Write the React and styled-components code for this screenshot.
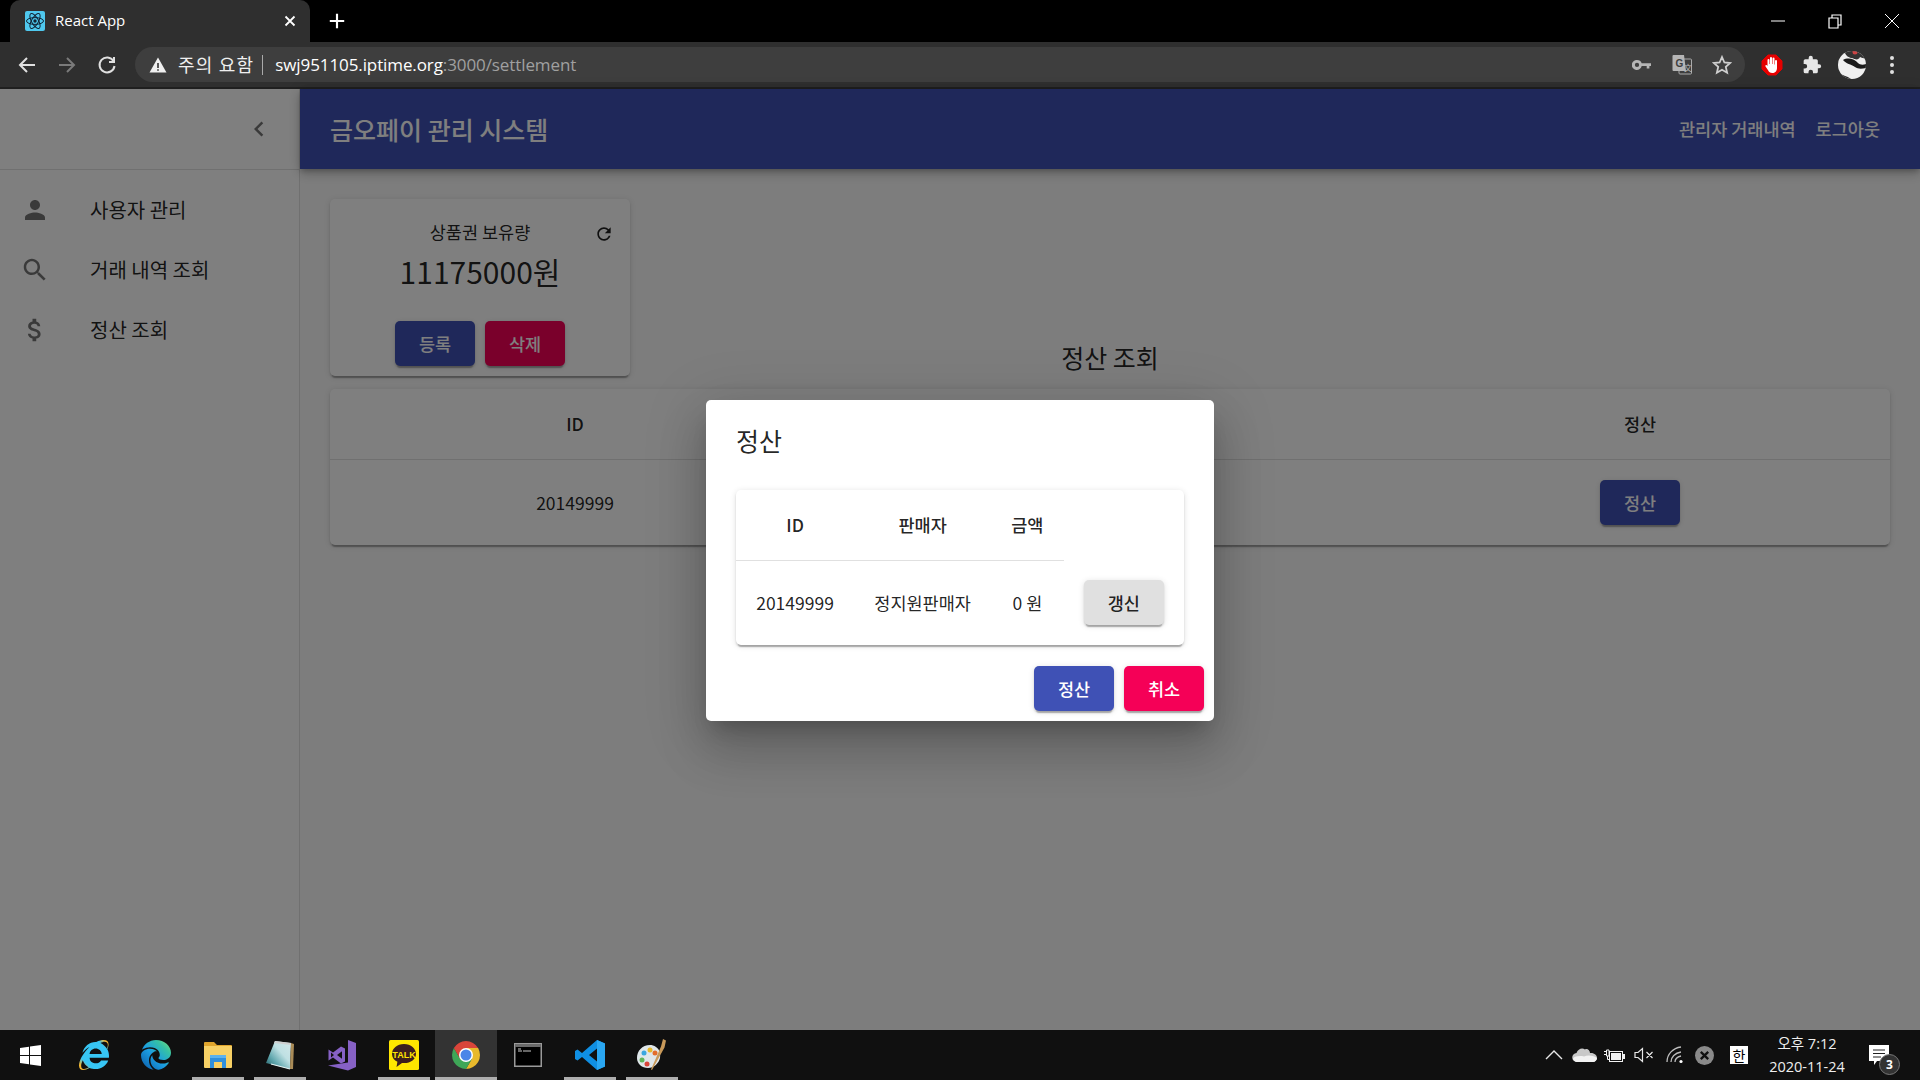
import React from 'react';
import styled, { createGlobalStyle } from 'styled-components';
import { FaInternetExplorer } from 'react-icons/fa';
import { RiEdgeNewFill } from 'react-icons/ri';

const KR = `"Noto Sans CJK KR", "Noto Sans", sans-serif`;
const UI = `"Open Sans", "Noto Sans CJK KR", sans-serif`;

const paperShadow = '0 4px 1px -2px rgba(0,0,0,.2), 0 2px 2px 0 rgba(0,0,0,.14), 0 1px 6px 0 rgba(0,0,0,.12)';

const GlobalStyle = createGlobalStyle`
  html, body { margin: 0; padding: 0; height: 100%; overflow: hidden; }
  body { font-family: ${KR}; color: rgba(0,0,0,.87); background: #000; }
  #root { height: 100%; }
  * { box-sizing: border-box; }
`;

// MUI icon paths
const paths = {
  person: 'M12 12c2.21 0 4-1.79 4-4s-1.79-4-4-4-4 1.79-4 4 1.79 4 4 4zm0 2c-2.67 0-8 1.34-8 4v2h16v-2c0-2.66-5.33-4-8-4z',
  search: 'M15.5 14h-.79l-.28-.27C15.41 12.59 16 11.11 16 9.5 16 5.91 13.09 3 9.5 3S3 5.91 3 9.5 5.91 16 9.5 16c1.61 0 3.09-.59 4.23-1.57l.27.28v.79l5 4.99L20.49 19l-4.99-5zm-6 0C7.01 14 5 11.99 5 9.5S7.01 5 9.5 5 14 7.01 14 9.5 11.99 14 9.5 14z',
  money: 'M11.8 10.9c-2.27-.59-3-1.2-3-2.15 0-1.09 1.01-1.85 2.7-1.85 1.78 0 2.44.85 2.5 2.1h2.21c-.07-1.72-1.12-3.3-3.21-3.81V3h-3v2.16c-1.94.42-3.5 1.68-3.5 3.61 0 2.31 1.91 3.46 4.7 4.13 2.5.6 3 1.48 3 2.41 0 .69-.49 1.79-2.7 1.79-2.06 0-2.87-.92-2.98-2.1h-2.2c.12 2.19 1.76 3.42 3.68 3.83V21h3v-2.15c1.95-.37 3.5-1.5 3.5-3.55 0-2.84-2.43-3.81-4.7-4.4z',
  chevron: 'M15.41 7.41L14 6l-6 6 6 6 1.41-1.41L10.83 12z',
  refresh: 'M17.65 6.35C16.2 4.9 14.21 4 12 4c-4.42 0-7.99 3.58-7.99 8s3.57 8 7.99 8c3.73 0 6.84-2.55 7.73-6h-2.08c-.82 2.33-3.04 4-5.65 4-3.31 0-6-2.69-6-6s2.69-6 6-6c1.66 0 3.14.69 4.22 1.78L13 11h7V4l-2.35 2.35z',
};

const MuiIcon = ({ name, size = 30, color = 'rgba(0,0,0,.54)' }) => (
  <svg width={size} height={size} viewBox="0 0 24 24" fill={color}><path d={paths[name]} /></svg>
);

/* ---------- browser frame ---------- */
const Screen = styled.div`
  width: 1920px;
  height: 1080px;
  display: flex;
  flex-direction: column;
  overflow: hidden;
`;

const TabStrip = styled.div`
  height: 42px;
  background: #000;
  display: flex;
  align-items: stretch;
  padding-left: 10px;
  flex-shrink: 0;
`;

const Tab = styled.div`
  width: 300px;
  background: #2f2f2f;
  border-radius: 10px 10px 0 0;
  display: flex;
  align-items: center;
  padding: 0 11px 0 15px;
  gap: 10px;
  color: #fff;
  font: 400 15px/20px ${UI};
`;

const TabTitle = styled.span`
  flex: 1;
  padding-bottom: 2px;
`;

const NewTab = styled.div`
  width: 54px;
  display: flex;
  align-items: center;
  justify-content: center;
`;

const WindowButtons = styled.div`
  margin-left: auto;
  display: flex;
  align-items: center;
`;

const WindowButton = styled.div`
  width: 57px;
  height: 38px;
  display: flex;
  align-items: center;
  justify-content: center;
`;

const ToolBar = styled.div`
  height: 47px;
  background: #2f2f2f;
  border-bottom: 2px solid #1f1f1f;
  display: flex;
  align-items: flex-start;
  padding: 5px 0 0 7px;
  flex-shrink: 0;
`;

const NavButton = styled.div`
  width: 40px;
  height: 35px;
  display: flex;
  align-items: center;
  justify-content: center;
`;

const Omnibox = styled.div`
  width: 1610px;
  height: 35px;
  margin-left: 8px;
  background: #3e3e3e;
  border-radius: 18px;
  display: flex;
  align-items: center;
  padding-left: 13px;
  font: 400 17px/35px ${UI};
  letter-spacing: -0.1px;
  white-space: nowrap;
`;

const Warning = styled.span`
  color: #f0f0f0;
  margin-left: 10px;
  font-family: ${KR};
  font-size: 18px;
  letter-spacing: 1.2px;
`;

const Divider = styled.span`
  width: 1px;
  height: 20px;
  background: #aaa;
  margin: 0 12px 0 8px;
`;

const Host = styled.span`
  color: #fff;
`;

const UrlRest = styled.span`
  color: #a0a0a0;
`;

const OmniIcons = styled.div`
  margin-left: auto;
  display: flex;
  align-items: center;
  padding-right: 3px;
`;

const OmniIcon = styled.div`
  width: 40px;
  display: flex;
  justify-content: center;
`;

const Extensions = styled.div`
  display: flex;
  align-items: center;
  height: 35px;
  margin-left: 7px;
`;

const ExtIcon = styled.div`
  width: 40px;
  display: flex;
  justify-content: center;
  align-items: center;
`;

/* ---------- app ---------- */
const Viewport = styled.div`
  position: relative;
  flex: 1;
  min-height: 0;
  display: flex;
  background: #fafafa;
`;

const Sidebar = styled.aside`
  width: 300px;
  flex-shrink: 0;
  background: #fff;
  border-right: 1px solid rgba(0,0,0,.12);
`;

const SidebarHead = styled.div`
  height: 81px;
  display: flex;
  align-items: center;
  justify-content: flex-end;
  padding-right: 25px;
  border-bottom: 1px solid rgba(0,0,0,.12);
`;

const NavList = styled.nav`
  padding-top: 10px;
`;

const NavItem = styled.div`
  height: 60px;
  display: flex;
  align-items: center;
  padding-left: 20px;
`;

const NavIcon = styled.div`
  width: 70px;
  display: flex;
`;

const NavLabel = styled.span`
  font-size: 20px;
  padding-bottom: 2px;
`;

const Content = styled.div`
  flex: 1;
  min-width: 0;
  display: flex;
  flex-direction: column;
`;

const AppBar = styled.header`
  height: 80px;
  background: #3f51b5;
  color: #fff;
  display: flex;
  align-items: center;
  justify-content: space-between;
  padding: 0 30px;
  box-shadow: 0 3px 5px -1px rgba(0,0,0,.2), 0 5px 10px 0 rgba(0,0,0,.14), 0 1px 14px 0 rgba(0,0,0,.12);
`;

const AppTitle = styled.h1`
  margin: 0;
  font-size: 25px;
  font-weight: 500;
`;

const AppLinks = styled.div`
  display: flex;
  padding-bottom: 2px;
`;

const AppLink = styled.span`
  padding: 0 10px;
  font-size: 17.5px;
  font-weight: 500;
`;

const Main = styled.main`
  padding: 30px;
`;

const TopRow = styled.div`
  display: grid;
  grid-template-columns: 300px 1fr 300px;
  margin-bottom: 13px;
`;

const Paper = styled.div`
  background: #fff;
  border-radius: 5px;
  box-shadow: ${paperShadow};
`;

const BalanceCard = styled(Paper)`
  height: 177px;
  padding: 17px 16px 10px;
  display: flex;
  flex-direction: column;
  align-items: center;
`;

const BalanceHead = styled.div`
  width: 100%;
  display: grid;
  grid-template-columns: 1fr auto 1fr;
  align-items: center;
  height: 30px;
`;

const BalanceLabel = styled.span`
  grid-column: 2;
  font-size: 17.5px;
`;

const RefreshIcon = styled.span`
  justify-self: end;
  display: flex;
  margin-top: 5px;
`;

const BalanceValue = styled.div`
  font-size: 30px;
  line-height: 46px;
  margin-top: 2px;
`;

const BalanceActions = styled.div`
  margin-top: auto;
  display: flex;
  gap: 10px;
`;

const PageTitle = styled.h2`
  margin: 0 0 1px;
  align-self: end;
  text-align: center;
  font-size: 25px;
  font-weight: 400;
  line-height: 36px;
`;

const buttonColors = {
  primary: ['#3f51b5', '#fff'],
  secondary: ['#f50057', '#fff'],
  plain: ['#e0e0e0', 'rgba(0,0,0,.87)'],
};

const Button = styled.button`
  width: 80px;
  height: 45px;
  border: 0;
  border-radius: 5px;
  background: ${p => buttonColors[p.$kind][0]};
  color: ${p => buttonColors[p.$kind][1]};
  font-family: ${KR};
  font-size: 17.5px;
  font-weight: 500;
  box-shadow: ${paperShadow};
`;

const Table = styled.table`
  width: 100%;
  border-collapse: collapse;
  table-layout: ${p => (p.$fixed ? 'fixed' : 'auto')};
`;

const HeadCell = styled.th`
  padding: 20px;
  font-size: 17.5px;
  font-weight: 500;
  line-height: 30px;
  text-align: center;
  border-bottom: 1px solid #e0e0e0;
`;

const Cell = styled.td`
  padding: 20px;
  font-size: 17.5px;
  line-height: 30px;
  text-align: center;
  white-space: nowrap;
`;

const ButtonRow = styled.div`
  display: flex;
  justify-content: center;
`;

const Overlay = styled.div`
  position: absolute;
  inset: 0;
  background: rgba(0,0,0,.5);
  display: flex;
  align-items: center;
  justify-content: center;
`;

const Dialog = styled.div`
  width: 508px;
  height: 321px;
  margin-top: 1px;
  background: #fff;
  border-radius: 5px;
  box-shadow: 0 14px 19px -8px rgba(0,0,0,.2), 0 30px 48px 4px rgba(0,0,0,.14), 0 11px 57px 10px rgba(0,0,0,.12);
  display: flex;
  flex-direction: column;
`;

const DialogTitle = styled.h3`
  margin: 0;
  padding: 20px 30px 30px;
  font-size: 25px;
  font-weight: 400;
  line-height: 40px;
`;

const DialogBody = styled.div`
  padding: 0 30px;
`;

const DialogActions = styled.div`
  display: flex;
  justify-content: flex-end;
  gap: 10px;
  padding: 21px 10px 9px;
`;

/* ---------- windows taskbar ---------- */
const Taskbar = styled.footer`
  height: 50px;
  flex-shrink: 0;
  background: #101010;
  display: flex;
  align-items: stretch;
  color: #fff;
`;

const StartSlot = styled.div`
  width: 63px;
  display: flex;
  align-items: center;
  justify-content: center;
  padding-right: 3px;
`;

const AppSlot = styled.div`
  position: relative;
  width: 62px;
  display: flex;
  align-items: center;
  justify-content: center;
  background: ${p => (p.$active ? '#333' : 'transparent')};
  &::after {
    content: '';
    display: ${p => (p.$running ? 'block' : 'none')};
    position: absolute;
    bottom: 0;
    left: ${p => (p.$active ? '0' : '5px')};
    right: ${p => (p.$active ? '0' : '5px')};
    height: 3px;
    background: #aeaeae;
  }
`;

const IeLogo = styled(FaInternetExplorer)`
  fill: url(#ieGrad);
`;

const EdgeLogo = styled(RiEdgeNewFill)`
  fill: url(#edgeGrad);
`;

const GradientDefs = styled.svg`
  width: 0;
  height: 0;
  position: absolute;
`;

const Tray = styled.div`
  margin-left: auto;
  display: flex;
  align-items: stretch;
  padding-right: 17px;
`;

const TraySlot = styled.div`
  width: ${p => p.$w}px;
  display: flex;
  align-items: center;
  justify-content: center;
  position: relative;
`;

const ImeBox = styled.span`
  width: 18px;
  height: 18px;
  background: #fff;
  color: #000;
  display: flex;
  align-items: center;
  justify-content: center;
  font: 400 14px/18px ${KR};
`;

const Clock = styled.div`
  text-align: center;
  font: 400 14.5px/23px ${UI};
  color: #eee;
  padding-bottom: 1px;
`;

const Badge = styled.span`
  position: absolute;
  left: 24px;
  top: 24px;
  width: 21px;
  height: 21px;
  border-radius: 50%;
  background: #333;
  border: 1px solid #777;
  display: flex;
  align-items: center;
  justify-content: center;
  font: 700 12px ${UI};
`;

/* ---------- drawings ---------- */
const ReactFavicon = () => (
  <svg width="20" height="20" viewBox="0 0 20 20">
    <rect width="20" height="20" rx="2" fill="#4fc8ee" />
    <g fill="none" stroke="#123" strokeWidth="1">
      <ellipse cx="10" cy="10" rx="8.5" ry="3.4" />
      <ellipse cx="10" cy="10" rx="8.5" ry="3.4" transform="rotate(60 10 10)" />
      <ellipse cx="10" cy="10" rx="8.5" ry="3.4" transform="rotate(120 10 10)" />
    </g>
    <circle cx="10" cy="10" r="1.7" fill="#123" />
  </svg>
);

const Line = ({ d, color = '#fff', w = 2, size = 20 }) => (
  <svg width={size} height={size} viewBox="0 0 20 20" fill="none" stroke={color} strokeWidth={w}><path d={d} /></svg>
);

const Shield = () => (
  <svg width="20" height="20" viewBox="0 0 20 20" fill="none"><path d="M10 2.5L18.5 17.5H1.5Z" fill="#f0f0f0" /><path d="M10 8v5M10 14.2v1.6" stroke="#3e3e3e" strokeWidth="1.7" /></svg>
);

const KeyIcon = () => (
  <svg width="20" height="20" viewBox="0 0 20 20" fill="#b5b5b5"><path fillRule="evenodd" d="M5 5a5 5 0 0 1 4.7 3.3H19V11h-1.6v2.6h-2.7V11H9.7A5 5 0 1 1 5 5zm0 2.8a2 2 0 1 0 0 4.3 2 2 0 0 0 0-4.3z" /></svg>
);

const TranslateIcon = () => (
  <svg width="20" height="22" viewBox="0 0 20 22">
    <rect x="7" y="5" width="12.5" height="15" rx="1" fill="#3e3e3e" stroke="#aaa" />
    <path d="M1.5 1h10.5l2 16H1.5a1 1 0 0 1-1-1V2a1 1 0 0 1 1-1z" fill="#b5b5b5" />
    <text x="3.5" y="13" fontSize="10" fontWeight="700" fontFamily="Liberation Sans" fill="#3e3e3e">G</text>
    <text x="12" y="17" fontSize="8" fontFamily="Noto Sans CJK SC" fill="#bbb">文</text>
  </svg>
);

const StarIcon = () => (
  <svg width="20" height="20" viewBox="0 0 20 20" fill="none" stroke="#cfcfcf" strokeWidth="1.8"><path d="M10 2l2.4 5.5 5.8.5-4.4 3.900 1.300 5.800L10 14.700l-5.100 3 1.300-5.800L1.800 8l5.800-.5z" /></svg>
);

const HandIcon = () => (
  <svg width="22" height="22" viewBox="0 0 22 22">
    <path d="M7 1h8l6 6v8l-6 6H7l-6-6V7z" fill="#e60000" stroke="#e60000" />
    <path d="M6.5 12V6a1 1 0 0 1 2 0v4h.5V4a1 1 0 0 1 2 0v6h.5V4.500a1 1 0 0 1 2 0V10.500h.5V7a1 1 0 0 1 2 0v7c0 3-2 5-4.700 5-2.300 0-3.300-1-4.200-2.700L4.500 12.500c-.6-1.200 1-2.200 2-.5z" fill="#fff" />
  </svg>
);

const PuzzleIcon = () => (
  <svg width="20" height="20" viewBox="0 0 24 24" fill="#e6e6e6"><path d="M20.5 11H19V7a2 2 0 0 0-2-2h-4V3.500a2.500 2.500 0 0 0-5 0V5H4a2 2 0 0 0-2 2v3.800h1.500a2.700 2.700 0 0 1 0 5.400H2V20a2 2 0 0 0 2 2h3.800v-1.500a2.700 2.700 0 0 1 5.400 0V22H17a2 2 0 0 0 2-2v-4h1.500a2.500 2.500 0 0 0 0-5z" /></svg>
);

const Avatar = () => (
  <svg width="28" height="28" viewBox="0 0 28 28">
    <defs><clipPath id="av"><circle cx="14" cy="14" r="14" /></clipPath></defs>
    <g clipPath="url(#av)">
      <rect width="28" height="28" fill="#f0f0f0" />
      <path d="M6 0h22v6c-2 2-4 1-6 0-2 4-5 2-8 1-3 0-6-2-8-7z" fill="#333" />
      <path d="M5 9c5-3 12-1 15 3 2 2 5 2 8 1v4c-5 1-8 1-11-1-4-3-9-3-12-7z" fill="#1c1c1c" />
      <path d="M0 22c4 2 9 3 13 6H0z" fill="#2a2a2a" />
      <circle cx="17" cy="1" r="2.5" fill="#c44" />
    </g>
  </svg>
);

const Dots = () => (
  <svg width="6" height="20" viewBox="0 0 6 20" fill="#e0e0e0"><circle cx="3" cy="3" r="2" /><circle cx="3" cy="10" r="2" /><circle cx="3" cy="17" r="2" /></svg>
);

const WinLogo = () => (
  <svg width="21" height="21" viewBox="0 0 21 21" fill="#fff">
    <path d="M0 3l9-1.300V10H0zM10 1.500L21 0v10H10zM0 11h9v8.300L0 18zM10 11h11v10l-11-1.500z" />
  </svg>
);

const LogoGradients = () => (
  <GradientDefs aria-hidden="true">
    <defs>
      <linearGradient id="ieGrad" x1="0" y1="1" x2="1" y2="0">
        <stop offset=".1" stopColor="#f2b632" />
        <stop offset=".24" stopColor="#37c6f4" />
        <stop offset=".8" stopColor="#37c6f4" />
        <stop offset=".92" stopColor="#f2b632" />
      </linearGradient>
      <linearGradient id="edgeGrad" x1="0" y1="1" x2="1" y2="0">
        <stop offset="0" stopColor="#0c59a4" />
        <stop offset=".45" stopColor="#1b9de2" />
        <stop offset=".75" stopColor="#35c1a5" />
        <stop offset="1" stopColor="#7fe07a" />
      </linearGradient>
    </defs>
  </GradientDefs>
);

const FolderIcon = () => (
  <svg width="28" height="30" viewBox="0 0 28 30">
    <path d="M0 3a1 1 0 0 1 1-1h9l3 3h14a1 1 0 0 1 1 1v2H0z" fill="#e0a52d" />
    <path d="M0 6h28v21a1 1 0 0 1-1 1H1a1 1 0 0 1-1-1z" fill="#f7d065" />
    <path d="M6 28V17h16v11h-4v-6h-8v6z" fill="#2f8fdc" />
    <rect x="6" y="15" width="16" height="3" fill="#5cb2ee" />
  </svg>
);

const NotepadIcon = () => (
  <svg width="28" height="32" viewBox="0 0 28 32">
    <defs><linearGradient id="note" x1="0" y1="1" x2="1" y2="0"><stop offset="0" stopColor="#1f5a62" /><stop offset=".3" stopColor="#5fa6ad" /><stop offset=".6" stopColor="#bfe0e3" /><stop offset="1" stopColor="#d3e8ea" /></linearGradient></defs>
    <path d="M9 2l16 2-1 26L0 24z" fill="url(#note)" />
    <path d="M25 4l3 1-1 25-3 0z" fill="#a98b57" />
    <path d="M9 2l16 2v2L8 4z" fill="#cfcfcf" />
    <path d="M5 25l19 5" stroke="#e6f2f2" strokeWidth="1.2" />
  </svg>
);

const VsIcon = () => (
  <svg width="30" height="32" viewBox="0 0 30 32">
    <path d="M21 1l8 3v24l-8 3.500L1 26.500l20-3z" fill="#8661c5" />
    <path fillRule="evenodd" fill="#8661c5" d="M1.500 10.500L6 13.500 14 7.500l4 2v13l-4 2-8-6-4.500 3zM4 13.500v5l3-2.500zM10 16l5 3.800V12.200z" />
  </svg>
);

const KakaoIcon = () => (
  <svg width="30" height="30" viewBox="0 0 30 30">
    <rect width="30" height="30" rx="1.5" fill="#ffe600" />
    <path d="M15 4C8 4 3 8.500 3 14c0 3.500 2.200 6.300 5.400 7.800L7.500 27l5.500-4c.7.100 1.300.100 2 .100 7 0 12-4 12-9.100S22 4 15 4z" fill="#3c1e1e" />
    <text x="15" y="17.5" textAnchor="middle" fontSize="9" fontWeight="700" fontFamily="Liberation Sans" fill="#ffe600">TALK</text>
  </svg>
);

const ChromeIcon = () => (
  <svg width="28" height="28" viewBox="-14 -14 28 28">
    <path d="M12.12 -7A14 14 0 0 1 0 14L6.06 3.5L0 -7z" fill="#e8b92c" />
    <path d="M-12.12 -7A14 14 0 0 0 0 14L6.06 3.5H-6.06z" fill="#3ea657" />
    <path d="M0 -7H12.12A14 14 0 0 0 -12.12 -7L-6.06 3.5z" fill="#d9453a" />
    <circle r="7" fill="#fff" />
    <circle r="5.5" fill="#4a86e8" />
  </svg>
);

const TerminalIcon = () => (
  <svg width="28" height="24" viewBox="0 0 28 24">
    <rect x=".75" y=".75" width="26.5" height="22.5" fill="#000" stroke="#9a9a9a" strokeWidth="1.5" />
    <rect x="1" y="1" width="26" height="3" fill="#6a6a6a" />
    <path d="M4 6h3M4 8h4M9 8h8" stroke="#ccc" strokeWidth="1" />
  </svg>
);

const VscodeIcon = () => (
  <svg width="30" height="30" viewBox="0 0 30 30">
    <path d="M22 0l8 3.500v23L22 30 7 17l-4.500 3.500L0 19v-8l2.500-1.500L7 13zM22 8.500l-8 6.500 8 6.500z" fill="#0f8fe3" fillRule="evenodd" />
    <path d="M22 0l8 3.500v23L22 30z" fill="#2aa7f2" />
  </svg>
);

const PaletteIcon = () => (
  <svg width="30" height="34" viewBox="0 0 30 34">
    <path d="M13 7C5 7 0 13 0 20c0 6 5 10 11 10 6 0 11-5 12-10 .7-4-.5-9-4-11-2-1.500-4-2-6-2z" fill="#dfe7ea" />
    <circle cx="7" cy="15" r="2.5" fill="#3aa7e0" />
    <circle cx="13" cy="12" r="2.5" fill="#e8b92c" />
    <circle cx="18" cy="15" r="2.5" fill="#e36d2a" />
    <circle cx="5" cy="22" r="2.5" fill="#5fb55a" />
    <circle cx="10" cy="26" r="2.5" fill="#d9453a" />
    <path d="M26 1l3 1.500-1.500 7L15 32l-1-.5 10-23z" fill="#c99a5a" />
  </svg>
);

const CloudIcon = () => (
  <svg width="25" height="16" viewBox="0 0 25 16"><path d="M5 15a4.500 4.500 0 0 1-.5-9C6 2 10 .5 13 2.500 15 1 18 3 18 6c4-.5 7 2 7 5 0 2-2 4-4 4z" fill="#c8c8c8" /><path d="M1 11.500C3 9 8 8.500 12 9.500c4-2 10-1 13 1.500 0 2-2 4-4 4H5c-2 0-3.500-1.500-4-3.500z" fill="#f2f2f2" /></svg>
);

const BatteryIcon = () => (
  <svg width="21" height="15" viewBox="0 0 21 15" fill="none">
    <path d="M0 3.500h3M0 6.500h3" stroke="#f2f2f2" />
    <path d="M2.500 2h2.500v6H2.500zM3.500 8v3.500H5" stroke="#f2f2f2" />
    <rect x="5.5" y="3.500" width="13" height="10" stroke="#f2f2f2" />
    <rect x="7" y="5" width="10" height="7" fill="#f2f2f2" />
    <rect x="19" y="6" width="2" height="5" fill="#f2f2f2" />
  </svg>
);

const VolumeIcon = () => (
  <svg width="20" height="16" viewBox="0 0 20 16" fill="none" stroke="#e8e8e8" strokeWidth="1.2"><path d="M1 5.500h3L8.500 1.500v13L4 10.500H1zM12.500 5l6 6M18.500 5l-6 6" /></svg>
);

const WifiIcon = () => (
  <svg width="18" height="18" viewBox="0 0 18 18" fill="none" stroke="#bdbdbd" strokeWidth="1.3">
    <path d="M1 16C1 8 7 2 15 1M5 16c0-5 4-9 10-10M9 16c0-3 2-5 6-6" />
    <circle cx="15" cy="15.5" r="1.6" fill="#fff" stroke="none" />
  </svg>
);

const ErrorDot = () => (
  <svg width="19" height="19" viewBox="0 0 18 18"><circle cx="9" cy="9" r="9" fill="#8a8a8a" /><path d="M5.500 5.500l7 7M12.500 5.500l-7 7" stroke="#101010" strokeWidth="2.2" /></svg>
);

const MessageIcon = () => (
  <svg width="20" height="20" viewBox="0 0 20 20"><path d="M0 0h20v16H8l-3 4v-4H0z" fill="#fff" /><path d="M4 5h12M4 8.500h12M4 12h8" stroke="#222" strokeWidth="1" /></svg>
);

const navItems = [
  { icon: 'person', label: '사용자 관리' },
  { icon: 'search', label: '거래 내역 조회' },
  { icon: 'money', label: '정산 조회' },
];

const taskApps = [
  { key: 'ie', icon: <IeLogo size={30} /> },
  { key: 'edge', icon: <EdgeLogo size={36} /> },
  { key: 'folder', icon: <FolderIcon />, running: true },
  { key: 'note', icon: <NotepadIcon />, running: true },
  { key: 'vs', icon: <VsIcon /> },
  { key: 'kakao', icon: <KakaoIcon />, running: true },
  { key: 'chrome', icon: <ChromeIcon />, running: true, active: true },
  { key: 'term', icon: <TerminalIcon /> },
  { key: 'code', icon: <VscodeIcon />, running: true },
  { key: 'paint', icon: <PaletteIcon />, running: true },
];

export default function App() {
  return (
    <Screen>
      <GlobalStyle />
      <LogoGradients />
      <TabStrip>
        <Tab>
          <ReactFavicon />
          <TabTitle>React App</TabTitle>
          <Line d="M5 5l10 10M15 5L5 15" w={2} size={18} />
        </Tab>
        <NewTab><Line d="M10 2v16M2 10h16" w={2.4} size={18} /></NewTab>
        <WindowButtons>
          <WindowButton><Line d="M3 10h14" w={1} /></WindowButton>
          <WindowButton><Line d="M4 7h9v10H4zM7 7V4h9v10h-3" w={1.2} /></WindowButton>
          <WindowButton><Line d="M3 3l14 14M17 3L3 17" w={1} /></WindowButton>
        </WindowButtons>
      </TabStrip>
      <ToolBar>
        <NavButton><Line d="M18 10H4M10 3l-7 7 7 7" color="#e0e0e0" /></NavButton>
        <NavButton><Line d="M2 10h14M10 3l7 7-7 7" color="#7a7a7a" /></NavButton>
        <NavButton><Line d="M16.500 6A7.500 7.500 0 1 0 17.500 11M17 2v5h-5" color="#e0e0e0" /></NavButton>
        <Omnibox>
          <Shield />
          <Warning>주의 요함</Warning>
          <Divider />
          <Host>swj951105.iptime.org</Host>
          <UrlRest>:3000/settlement</UrlRest>
          <OmniIcons>
            <OmniIcon><KeyIcon /></OmniIcon>
            <OmniIcon><TranslateIcon /></OmniIcon>
            <OmniIcon><StarIcon /></OmniIcon>
          </OmniIcons>
        </Omnibox>
        <Extensions>
          <ExtIcon><HandIcon /></ExtIcon>
          <ExtIcon><PuzzleIcon /></ExtIcon>
          <ExtIcon><Avatar /></ExtIcon>
          <ExtIcon><Dots /></ExtIcon>
        </Extensions>
      </ToolBar>

      <Viewport>
        <Sidebar>
          <SidebarHead><MuiIcon name="chevron" /></SidebarHead>
          <NavList>
            {navItems.map(item => (
              <NavItem key={item.label}>
                <NavIcon><MuiIcon name={item.icon} /></NavIcon>
                <NavLabel>{item.label}</NavLabel>
              </NavItem>
            ))}
          </NavList>
        </Sidebar>
        <Content>
          <AppBar>
            <AppTitle>금오페이 관리 시스템</AppTitle>
            <AppLinks>
              <AppLink>관리자 거래내역</AppLink>
              <AppLink>로그아웃</AppLink>
            </AppLinks>
          </AppBar>
          <Main>
            <TopRow>
              <BalanceCard>
                <BalanceHead>
                  <BalanceLabel>상품권 보유량</BalanceLabel>
                  <RefreshIcon><MuiIcon name="refresh" size={20} color="rgba(0,0,0,.87)" /></RefreshIcon>
                </BalanceHead>
                <BalanceValue>11175000원</BalanceValue>
                <BalanceActions>
                  <Button $kind="primary">등록</Button>
                  <Button $kind="secondary">삭제</Button>
                </BalanceActions>
              </BalanceCard>
              <PageTitle>정산 조회</PageTitle>
            </TopRow>
            <Paper>
              <Table $fixed>
                <colgroup>
                  <col width="490" />
                  <col />
                  <col width="500" />
                </colgroup>
                <thead>
                  <tr>
                    <HeadCell>ID</HeadCell>
                    <HeadCell />
                    <HeadCell>정산</HeadCell>
                  </tr>
                </thead>
                <tbody>
                  <tr>
                    <Cell>20149999</Cell>
                    <Cell />
                    <Cell><ButtonRow><Button $kind="primary">정산</Button></ButtonRow></Cell>
                  </tr>
                </tbody>
              </Table>
            </Paper>
          </Main>
        </Content>

        <Overlay>
          <Dialog>
            <DialogTitle>정산</DialogTitle>
            <DialogBody>
              <Paper>
                <Table>
                  <thead>
                    <tr>
                      <HeadCell>ID</HeadCell>
                      <HeadCell>판매자</HeadCell>
                      <HeadCell>금액</HeadCell>
                    </tr>
                  </thead>
                  <tbody>
                    <tr>
                      <Cell>20149999</Cell>
                      <Cell>정지원판매자</Cell>
                      <Cell>0 원</Cell>
                      <Cell><Button $kind="plain">갱신</Button></Cell>
                    </tr>
                  </tbody>
                </Table>
              </Paper>
            </DialogBody>
            <DialogActions>
              <Button $kind="primary">정산</Button>
              <Button $kind="secondary">취소</Button>
            </DialogActions>
          </Dialog>
        </Overlay>
      </Viewport>

      <Taskbar>
        <StartSlot><WinLogo /></StartSlot>
        {taskApps.map(app => (
          <AppSlot key={app.key} $running={app.running} $active={app.active}>{app.icon}</AppSlot>
        ))}
        <Tray>
          <TraySlot $w={30}><Line d="M2 14l8-8 8 8" color="#e8e8e8" w={1.4} /></TraySlot>
          <TraySlot $w={30}><CloudIcon /></TraySlot>
          <TraySlot $w={30}><BatteryIcon /></TraySlot>
          <TraySlot $w={30}><VolumeIcon /></TraySlot>
          <TraySlot $w={31}><WifiIcon /></TraySlot>
          <TraySlot $w={29}><ErrorDot /></TraySlot>
          <TraySlot $w={40}><ImeBox>한</ImeBox></TraySlot>
          <TraySlot $w={96}><Clock>오후 7:12<br />2020-11-24</Clock></TraySlot>
          <TraySlot $w={48}>
            <MessageIcon />
            <Badge>3</Badge>
          </TraySlot>
        </Tray>
      </Taskbar>
    </Screen>
  );
}
